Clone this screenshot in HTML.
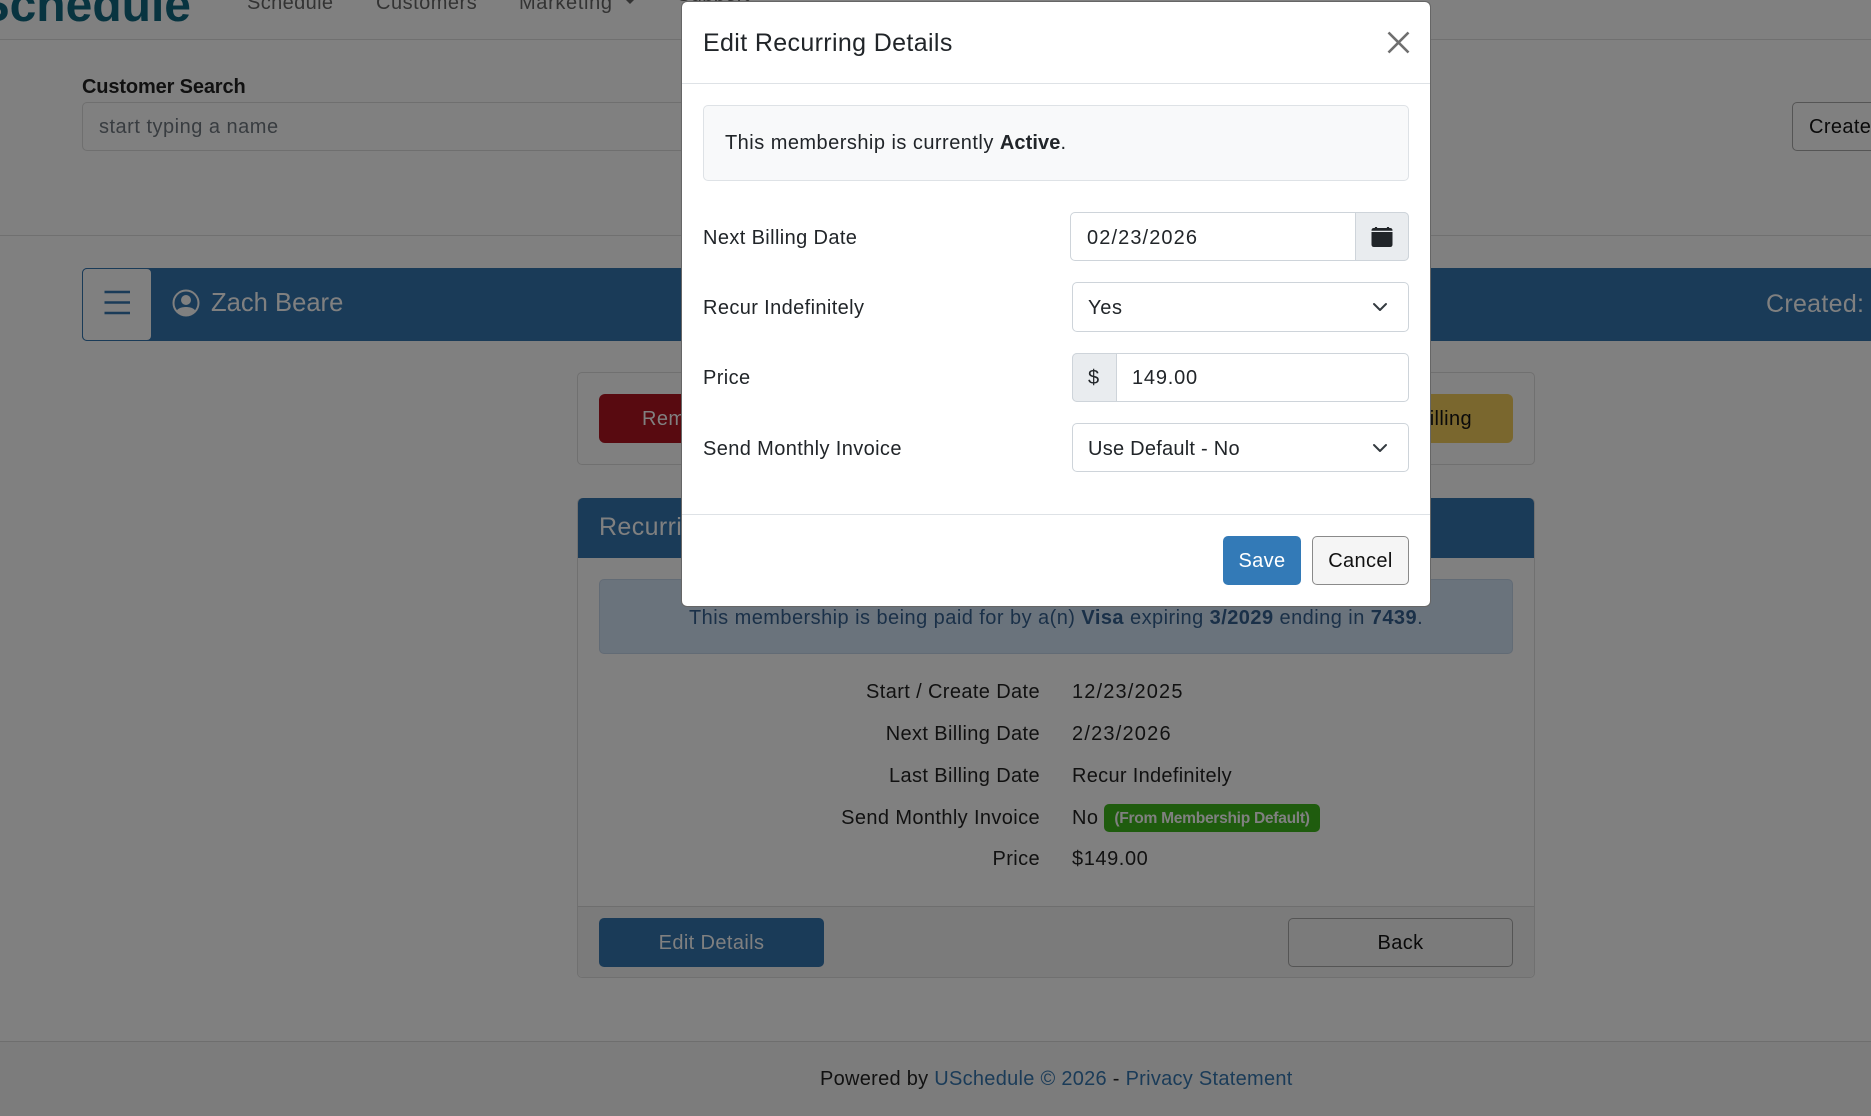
<!DOCTYPE html>
<html lang="en">
<head>
<meta charset="utf-8">
<title>Edit Recurring Details</title>
<style>
html,body{margin:0;padding:0}
body{width:1871px;height:1116px;overflow:hidden;position:relative;background:#808080;font-family:"Liberation Sans",Arial,sans-serif;font-size:20px;color:#111;letter-spacing:.38px}
.a{position:absolute;box-sizing:border-box}
.t{position:absolute;white-space:nowrap;line-height:24px;height:24px}
.r{text-align:right}
.m{background:#fff;color:#212529}
.in{border:1px solid #ced4da;border-radius:5px;background:#fff}
</style>
</head>
<body>
<!-- header -->
<div class="a" style="left:0;top:39px;width:1871px;height:1px;background:#707070"></div>
<div class="t" style="left:-60px;top:-24px;width:251px;text-align:right;font-size:48px;line-height:60px;height:60px;font-weight:bold;color:#083440;letter-spacing:0">Schedule</div>
<div class="t" style="left:247px;top:-9px;color:#333">Schedule</div>
<div class="t" style="left:376px;top:-9px;color:#333;letter-spacing:.5px">Customers</div>
<div class="t" style="left:519px;top:-9px;color:#333;letter-spacing:.65px">Marketing</div>
<div class="a" style="left:626px;top:0;width:0;height:0;border-left:4px solid transparent;border-right:4px solid transparent;border-top:4px solid #333"></div>
<div class="t" style="left:677px;top:-17px;color:#333">Support</div>

<!-- customer search -->
<div class="t" style="left:82px;top:75px;font-weight:bold;color:#111;letter-spacing:-.14px">Customer Search</div>
<div class="a" style="left:82px;top:102px;width:640px;height:49px;border:1px solid #6f6f6f;border-radius:5px"></div>
<div class="t" style="left:99px;top:115px;color:#383c40;letter-spacing:.5px">start typing a name</div>
<div class="a" style="left:1792px;top:102px;width:100px;height:49px;border:1px solid #555;border-radius:5px"></div>
<div class="t" style="left:1809px;top:115px;color:#0a0a0a">Create</div>
<div class="a" style="left:0;top:235px;width:1871px;height:1px;background:#707070"></div>

<!-- blue bar -->
<div class="a" style="left:82px;top:268px;width:1789px;height:73px;background:#1a3b58;border-radius:5px 0 0 5px"></div>
<div class="a" style="left:82px;top:268px;width:70px;height:73px;background:#808080;border:1px solid #1a3b58;border-radius:5px"></div>
<svg class="a" style="left:82px;top:268px" width="70" height="73" viewBox="0 0 70 73"><path d="M22.500 24H48M22.500 34.500H48M22.500 45H48" stroke="#1a3b58" stroke-width="2.600" fill="none"/></svg>
<svg class="a" style="left:172px;top:289px" width="28" height="28" viewBox="0 0 28 28"><defs><clipPath id="c"><circle cx="14" cy="14" r="12"/></clipPath></defs><circle cx="14" cy="14" r="12.500" fill="none" stroke="#808080" stroke-width="2"/><circle cx="14" cy="11" r="5" fill="#808080"/><path d="M3 28C3 20 8 18 14 18S25 20 25 28Z" fill="#808080" clip-path="url(#c)"/></svg>
<div class="t" style="left:211px;top:289px;font-size:25.600px;line-height:28px;height:28px;color:#808080;letter-spacing:0">Zach Beare</div>
<div class="t" style="left:1766px;top:290px;font-size:25px;line-height:28px;height:28px;color:#808080;letter-spacing:.3px">Created:</div>

<!-- actions card -->
<div class="a" style="left:577px;top:372px;width:958px;height:93px;border:1px solid #707070;border-radius:5px"></div>
<div class="a" style="left:599px;top:394px;width:200px;height:49px;background:#580a10;border-radius:6px"></div>
<div class="t" style="left:642px;top:407px;color:#808080">Remove</div>
<div class="a" style="left:1300px;top:394px;width:213px;height:49px;background:#7a672e;border-radius:6px"></div>
<div class="t" style="left:1300px;top:407px;width:172px;text-align:right;color:#0a0a0a">Update Billing</div>

<!-- recurring card -->
<div class="a" style="left:577px;top:498px;width:958px;height:480px;border:1px solid #707070;border-radius:5px"></div>
<div class="a" style="left:578px;top:498px;width:956px;height:60px;background:#1a3b58;border-radius:5px 5px 0 0"></div>
<div class="t" style="left:599px;top:513px;font-size:25px;line-height:28px;height:28px;color:#808080">Recurring Details</div>
<div class="a" style="left:599px;top:579px;width:914px;height:75px;background:#6a737c;border:1px solid #626b75;border-radius:5px"></div>
<div class="t" style="left:689px;top:606px;color:#1a3048;letter-spacing:.45px">This membership is being paid for by a(n) <b>Visa</b> expiring <b>3/2029</b> ending in <b>7439</b>.</div>

<div class="t r" style="left:700px;top:680px;width:340px;color:#111">Start / Create Date</div>
<div class="t" style="left:1072px;top:680px;color:#111;letter-spacing:1.150px">12/23/2025</div>
<div class="t r" style="left:700px;top:722px;width:340px;color:#111">Next Billing Date</div>
<div class="t" style="left:1072px;top:722px;color:#111;letter-spacing:1.200px">2/23/2026</div>
<div class="t r" style="left:700px;top:764px;width:340px;color:#111">Last Billing Date</div>
<div class="t" style="left:1072px;top:764px;color:#111;letter-spacing:.3px">Recur Indefinitely</div>
<div class="t r" style="left:700px;top:806px;width:340px;color:#111">Send Monthly Invoice</div>
<div class="t" style="left:1072px;top:806px;color:#111">No</div>
<div class="a" style="left:1104px;top:804px;width:216px;height:28px;background:#1f5c0e;border-radius:5px"></div>
<div class="t" style="left:1104px;top:807px;width:216px;text-align:center;font-size:15.600px;font-weight:bold;color:#808080;letter-spacing:-.3px">(From Membership Default)</div>
<div class="t r" style="left:700px;top:847px;width:340px;color:#111">Price</div>
<div class="t" style="left:1072px;top:847px;color:#111;letter-spacing:.58px">$149.00</div>

<div class="a" style="left:578px;top:906px;width:956px;height:71px;background:#7b7b7b;border-top:1px solid #6e6e6e;border-radius:0 0 5px 5px"></div>
<div class="a" style="left:599px;top:918px;width:225px;height:49px;background:#1a3b58;border-radius:5px"></div>
<div class="t" style="left:599px;top:931px;width:225px;text-align:center;color:#808080">Edit Details</div>
<div class="a" style="left:1288px;top:918px;width:225px;height:49px;border:1px solid #555;border-radius:5px"></div>
<div class="t" style="left:1288px;top:931px;width:225px;text-align:center;color:#0a0a0a">Back</div>

<!-- footer -->
<div class="a" style="left:0;top:1041px;width:1871px;height:75px;background:#7c7c7c;border-top:1px solid #6e6e6e"></div>
<div class="t" style="left:820px;top:1067px;color:#111;letter-spacing:.28px">Powered by <span style="color:#1a3b58">USchedule © 2026</span> - <span style="color:#1a3b58">Privacy Statement</span></div>

<!-- modal -->
<div class="a m" style="left:681px;top:1px;width:750px;height:606px;border:1px solid #666;border-radius:6px"></div>
<div class="t" style="left:703px;top:29px;font-size:25px;line-height:28px;height:28px;color:#212529;letter-spacing:.36px">Edit Recurring Details</div>
<svg class="a" style="left:1386px;top:30px" width="25" height="25" viewBox="0 0 25 25"><path d="M2.500 2.500L22.500 22.500M22.500 2.500L2.500 22.500" stroke="#6f6f6f" stroke-width="2.600" fill="none"/></svg>
<div class="a" style="left:682px;top:83px;width:748px;height:1px;background:#dee2e6"></div>

<div class="a" style="left:703px;top:105px;width:706px;height:76px;background:#f8f9fa;border:1px solid #dee2e6;border-radius:5px"></div>
<div class="t" style="left:725px;top:131px;color:#212529;letter-spacing:.47px">This membership is currently <b style="letter-spacing:.1px">Active</b>.</div>

<div class="t" style="left:703px;top:226px;color:#212529">Next Billing Date</div>
<div class="a in" style="left:1070px;top:212px;width:339px;height:49px"></div>
<div class="a" style="left:1355px;top:212px;width:54px;height:49px;background:#e9ecef;border:1px solid #ced4da;border-radius:0 5px 5px 0"></div>
<div class="t" style="left:1087px;top:226px;color:#212529;letter-spacing:1.100px">02/23/2026</div>
<svg class="a" style="left:1371px;top:226px" width="22" height="22" viewBox="0 0 22 22"><path d="M5 1V3M17 1V3" stroke="#212529" stroke-width="2.200" fill="none"/><path d="M3 2H19Q21.500 2 21.500 4.500V4.700H.5V4.500Q.5 2 3 2Z" fill="#212529"/><path d="M.5 6H21.500V18.500Q21.500 21 19 21H3Q.5 21 .5 18.500Z" fill="#212529"/></svg>

<div class="t" style="left:703px;top:296px;color:#212529">Recur Indefinitely</div>
<div class="a in" style="left:1072px;top:282px;width:337px;height:50px"></div>
<div class="t" style="left:1088px;top:296px;color:#212529;letter-spacing:.7px">Yes</div>
<svg class="a" style="left:1372px;top:299px" width="16" height="16" viewBox="0 0 16 16"><path d="M2 5L8 11L14 5" fill="none" stroke="#343a40" stroke-width="2" stroke-linecap="round" stroke-linejoin="round"/></svg>

<div class="t" style="left:703px;top:366px;color:#212529">Price</div>
<div class="a in" style="left:1072px;top:353px;width:337px;height:49px"></div>
<div class="a" style="left:1072px;top:353px;width:45px;height:49px;background:#e9ecef;border:1px solid #ced4da;border-radius:5px 0 0 5px"></div>
<div class="t" style="left:1088px;top:366px;color:#212529">$</div>
<div class="t" style="left:1132px;top:366px;color:#212529;letter-spacing:.8px">149.00</div>

<div class="t" style="left:703px;top:437px;color:#212529">Send Monthly Invoice</div>
<div class="a in" style="left:1072px;top:423px;width:337px;height:49px"></div>
<div class="t" style="left:1088px;top:437px;color:#212529;letter-spacing:.25px">Use Default - No</div>
<svg class="a" style="left:1372px;top:440px" width="16" height="16" viewBox="0 0 16 16"><path d="M2 5L8 11L14 5" fill="none" stroke="#343a40" stroke-width="2" stroke-linecap="round" stroke-linejoin="round"/></svg>

<div class="a" style="left:682px;top:514px;width:748px;height:1px;background:#dee2e6"></div>
<div class="a" style="left:1223px;top:536px;width:78px;height:49px;background:#337ab7;border-radius:5px"></div>
<div class="t" style="left:1223px;top:549px;width:78px;text-align:center;color:#fff">Save</div>
<div class="a" style="left:1312px;top:536px;width:97px;height:49px;background:#f5f5f5;border:1px solid #8a8a8a;border-radius:5px"></div>
<div class="t" style="left:1312px;top:549px;width:97px;text-align:center;color:#111">Cancel</div>
</body>
</html>
